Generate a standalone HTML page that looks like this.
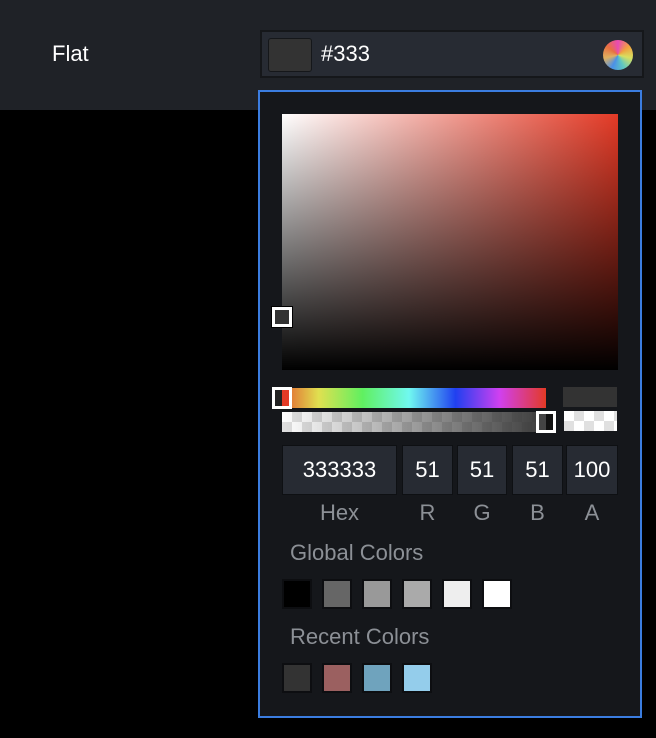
<!DOCTYPE html>
<html><head><style>
*{margin:0;padding:0;box-sizing:border-box}
body{width:656px;height:738px;background:#000;position:relative;overflow:hidden;font-family:"Liberation Sans",sans-serif}
.a{position:absolute}
.chk{background-color:#fff;background-image:linear-gradient(45deg,#e0e0e0 25%,transparent 25%,transparent 75%,#e0e0e0 75%),linear-gradient(45deg,#e0e0e0 25%,transparent 25%,transparent 75%,#e0e0e0 75%);background-size:20px 20px;background-position:0 0,10px 10px}
.inp{background:#272b33;border:1px solid #0e1013;color:#fff;font-size:22px;text-align:center;line-height:48px;height:50px;top:445px}
.lab{color:#8c9096;font-size:22px;top:500px;text-align:center}
.sw{width:30px;height:30px;border:2px solid #0d0e11}
.t{color:#8c9096;font-size:22px;left:290px}
</style></head><body>
<div class="a" style="left:0;top:0;width:656px;height:110px;background:#1f2227"></div>
<div class="a" style="left:52px;top:41px;color:#fff;font-size:22px">Flat</div>
<div class="a" style="left:260px;top:30px;width:384px;height:48px;background:#272b33;border:2px solid #15171a"></div>
<div class="a" style="left:268px;top:38px;width:44px;height:34px;background:#333;border:1px solid #15171a;border-radius:3px"></div>
<div class="a" style="left:321px;top:41px;color:#fff;font-size:22px">#333</div>
<div class="a" style="left:603px;top:40px;width:30px;height:30px;border-radius:50%;background:conic-gradient(from 0deg,#e84bb4,#f0a040,#d8e060,#60c8c0,#4a90e8,#e0b060,#e87040,#e84bb4)"></div>
<div class="a" style="left:258px;top:90px;width:384px;height:628px;background:#15171b;border:2px solid #3b7de0"></div>
<div class="a" style="left:282px;top:114px;width:336px;height:256px;background:linear-gradient(to bottom,transparent,#000),linear-gradient(to right,#fff,#e33a26)"></div>
<div class="a" style="left:272px;top:307px;width:20px;height:20px;border:3px solid #fff;background:#333;outline:1px solid #000"></div>
<div class="a" style="left:272px;top:388px;width:274px;height:20px;background:linear-gradient(to right,#e33a26,#e0e050 17%,#60f060 33%,#70f8f0 50%,#2040f0 67%,#d040f0 83%,#e33a26)"></div>
<div class="a" style="left:272px;top:387px;width:20px;height:22px;border:3px solid #fff;background:linear-gradient(to right,#222 50%,#e33a26 50%)"></div>
<div class="a chk" style="left:282px;top:412px;width:274px;height:20px"></div>
<div class="a" style="left:282px;top:412px;width:274px;height:20px;background:linear-gradient(to right,rgba(51,51,51,0),#333)"></div>
<div class="a" style="left:536px;top:411px;width:20px;height:22px;border:3px solid #fff;background:linear-gradient(to right,#444 50%,#111 50%)"></div>
<div class="a" style="left:563px;top:387px;width:54px;height:20px;background:#333"></div>
<div class="a chk" style="left:564px;top:411px;width:53px;height:20px"></div>
<div class="a inp" style="left:282px;width:115px">333333</div>
<div class="a inp" style="left:402px;width:51px">51</div>
<div class="a inp" style="left:457px;width:50px">51</div>
<div class="a inp" style="left:512px;width:51px">51</div>
<div class="a inp" style="left:566px;width:52px">100</div>
<div class="a lab" style="left:282px;width:115px">Hex</div>
<div class="a lab" style="left:402px;width:51px">R</div>
<div class="a lab" style="left:457px;width:50px">G</div>
<div class="a lab" style="left:512px;width:51px">B</div>
<div class="a lab" style="left:566px;width:52px">A</div>
<div class="a t" style="top:540px">Global Colors</div>
<div class="a sw" style="left:282px;top:579px;background:#000"></div>
<div class="a sw" style="left:322px;top:579px;background:#666"></div>
<div class="a sw" style="left:362px;top:579px;background:#999"></div>
<div class="a sw" style="left:402px;top:579px;background:#aaa"></div>
<div class="a sw" style="left:442px;top:579px;background:#eee"></div>
<div class="a sw" style="left:482px;top:579px;background:#fff"></div>
<div class="a t" style="top:624px">Recent Colors</div>
<div class="a sw" style="left:282px;top:663px;background:#333"></div>
<div class="a sw" style="left:322px;top:663px;background:#9b6060"></div>
<div class="a sw" style="left:362px;top:663px;background:#6fa3bd"></div>
<div class="a sw" style="left:402px;top:663px;background:#94cdeb"></div>
</body></html>
